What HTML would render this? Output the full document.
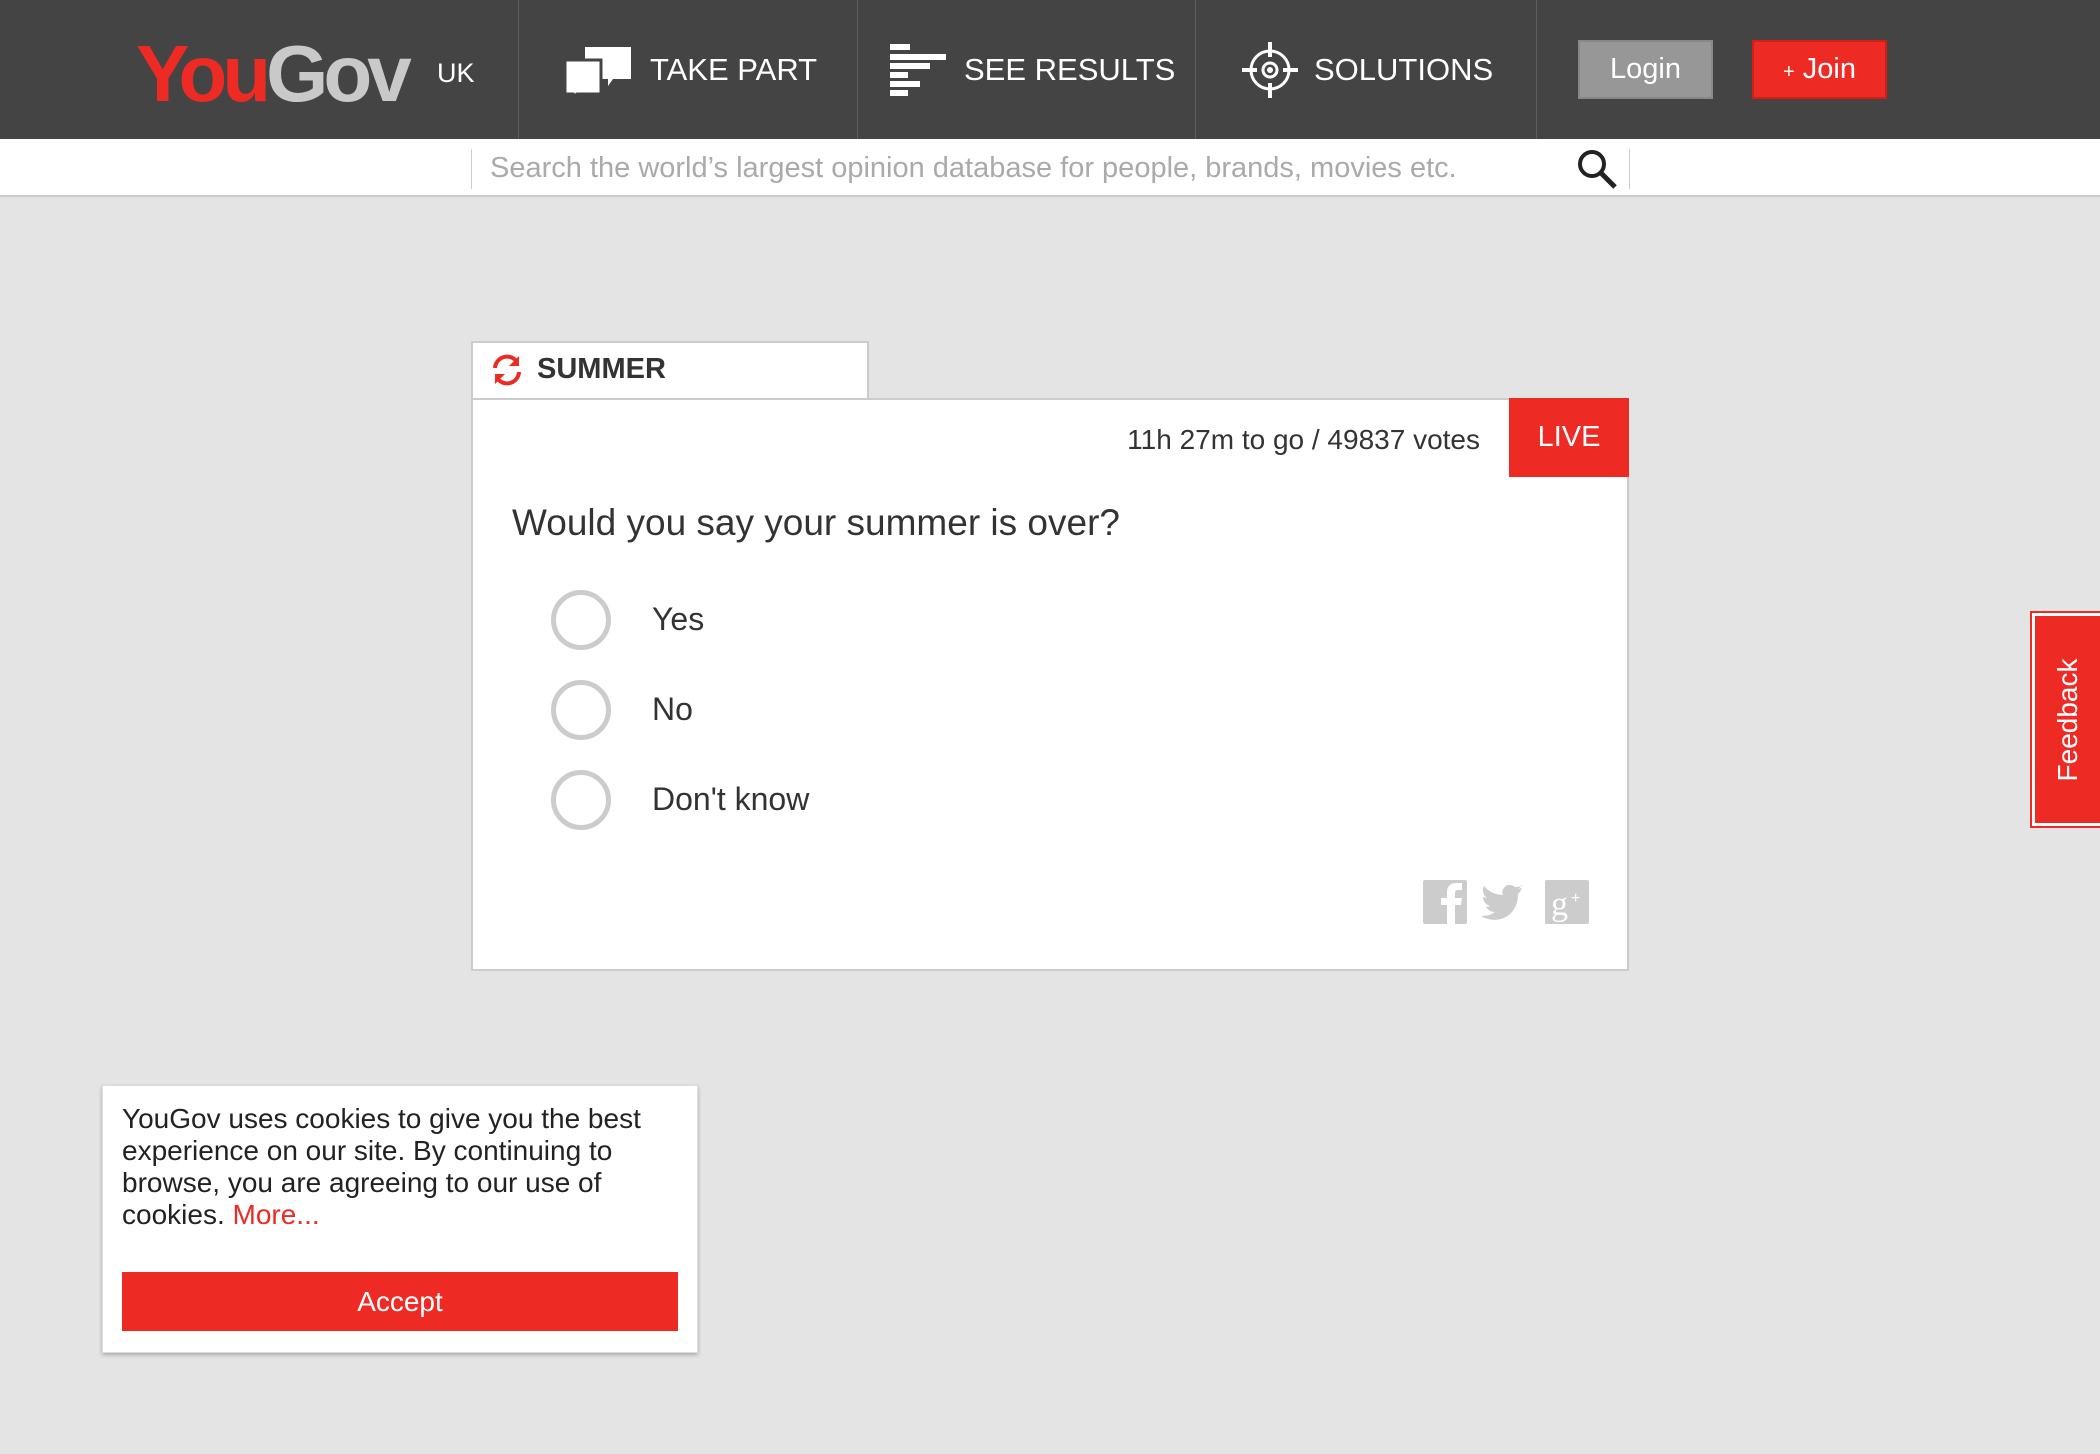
<!DOCTYPE html>
<html><head><meta charset="utf-8"><style>
*{margin:0;padding:0;box-sizing:border-box}
body{width:2100px;height:1454px;background:#e4e4e4;font-family:"Liberation Sans",sans-serif;position:relative;overflow:hidden;color:#333}
.hdr{position:absolute;left:0;top:0;width:2100px;height:139px;background:#444}
.div{position:absolute;top:0;width:1px;height:139px;background:#5e5e5e}
.nav{position:absolute;top:50px;color:#fff;font-size:31px;line-height:40px}
.logo{position:absolute;left:136px;top:24px;font-size:80px;font-weight:bold;letter-spacing:-5px;line-height:100px}
.sb{position:absolute;left:0;top:139px;width:2100px;height:58px;background:#fff;border-bottom:2px solid #ccc}
.abs{position:absolute}
</style></head><body>
<div class="hdr">
 <div class="logo"><span style="color:#ee2a24">You</span><span style="color:#c9c9c9">Gov</span></div>
 <div class="abs" style="left:437px;top:58px;color:#fff;font-size:27px">UK</div>
 <div class="div" style="left:518px"></div><div class="div" style="left:857px"></div><div class="div" style="left:1195px"></div><div class="div" style="left:1536px"></div>
 <svg class="abs" style="left:563px;top:44px" width="70" height="54" viewBox="0 0 70 54"><path d="M22 3h46v32h-18l-5 7v-7h-23z" fill="#fff"/><path d="M2 16h36v34h-24l-4 3v-3h-8z" fill="#fff" stroke="#444" stroke-width="3"/></svg>
 <div class="nav" style="left:650px">TAKE PART</div>
 <svg class="abs" style="left:890px;top:44px" width="58" height="54"><g fill="#fff"><rect x="0" y="0" width="20" height="6"/><rect x="0" y="10" width="56" height="6"/><rect x="0" y="19" width="40" height="6"/><rect x="0" y="28" width="18" height="6"/><rect x="0" y="37" width="30" height="6"/><rect x="0" y="46" width="18" height="6"/></g></svg>
 <div class="nav" style="left:964px">SEE RESULTS</div>
 <svg class="abs" style="left:1241px;top:41px" width="58" height="58" viewBox="0 0 58 58"><circle cx="29" cy="29" r="19" fill="none" stroke="#fff" stroke-width="3"/><circle cx="29" cy="29" r="7" fill="none" stroke="#fff" stroke-width="3"/><circle cx="29" cy="29" r="3" fill="#fff"/><g stroke="#fff" stroke-width="4"><path d="M29 1v15M29 42v15M1 29h15M42 29h15"/></g></svg>
 <div class="nav" style="left:1314px">SOLUTIONS</div>
 <div class="abs" style="left:1578px;top:40px;width:135px;height:59px;background:#979797;border:2px solid #888;color:#fff;font-size:29px;text-align:center;line-height:55px">Login</div>
 <div class="abs" style="left:1752px;top:40px;width:135px;height:59px;background:#ee2a24;border:2px solid #d41d17;color:#fff;font-size:29px;text-align:center;line-height:55px"><span style="font-size:20px">+</span> Join</div>
</div>
<div class="sb">
 <div class="abs" style="left:471px;top:10px;width:1px;height:40px;background:#ccc"></div>
 <div class="abs" style="left:1629px;top:10px;width:1px;height:40px;background:#ccc"></div>
 <div class="abs" style="left:490px;top:13px;font-size:29px;color:#aaa">Search the world’s largest opinion database for people, brands, movies etc.</div>
 <svg class="abs" style="left:1576px;top:9px" width="44" height="44"><circle cx="16" cy="16" r="12" fill="none" stroke="#222" stroke-width="4"/><path d="M25 25l14 14" stroke="#222" stroke-width="5"/></svg>
</div>
<div class="abs" style="left:471px;top:341px;width:398px;height:59px;background:#fff;border:2px solid #ccc;border-bottom:none"></div>
<svg class="abs" style="left:490px;top:353px" width="34" height="34" viewBox="0 0 34 34"><path d="M5 15A12 12 0 0 1 27 9" fill="none" stroke="#ee2a24" stroke-width="4"/><path d="M29 19A12 12 0 0 1 7 25" fill="none" stroke="#ee2a24" stroke-width="4"/><path d="M29 3v10h-10z" fill="#ee2a24"/><path d="M5 31v-10h10z" fill="#ee2a24"/></svg>
<div class="abs" style="left:537px;top:353px;font-size:29px;font-weight:bold;color:#333">SUMMER</div>
<div class="abs" style="left:471px;top:398px;width:1158px;height:573px;background:#fff;border:2px solid #ccc"></div>
<div class="abs" style="left:1509px;top:398px;width:120px;height:79px;background:#ee2a24;color:#fff;font-size:29px;text-align:center;line-height:79px">LIVE</div>
<div class="abs" style="left:1000px;width:480px;text-align:right;top:424px;font-size:28px;color:#333">11h 27m to go / 49837 votes</div>
<div class="abs" style="left:512px;top:502px;font-size:37px;color:#333">Would you say your summer is over?</div>
<div class="abs" style="left:551px;top:590px;width:60px;height:60px;border:5px solid #ccc;border-radius:50%"></div>
<div class="abs" style="left:551px;top:680px;width:60px;height:60px;border:5px solid #ccc;border-radius:50%"></div>
<div class="abs" style="left:551px;top:770px;width:60px;height:60px;border:5px solid #ccc;border-radius:50%"></div>
<div class="abs" style="left:652px;top:601px;font-size:32px">Yes</div>
<div class="abs" style="left:652px;top:691px;font-size:32px">No</div>
<div class="abs" style="left:652px;top:781px;font-size:32px">Don't know</div>
<svg class="abs" style="left:1423px;top:877px" width="168" height="50"><rect x="0" y="3" width="44" height="44" rx="2" fill="#ccc"/><path d="M24 47V28h-6v-7h6v-6c0-6 4-9 9-9h6v7h-4c-2 0-3 1-3 3v5h7l-1 7h-6v19z" fill="#fff"/><path d="M100 8c-3 2-6 2-8 2-3-3-9-3-11 1-2 2-2 5-1 7-8 0-15-4-19-9-2 4-1 9 3 12-2 0-3-1-4-1 0 4 3 8 7 9-2 1-3 1-4 0 1 4 5 6 9 6-4 3-9 4-14 4 17 10 37 0 37-22 2-2 3-4 4-6l-4 1c2-1 3-3 4-4z" fill="#ccc"/><rect x="122" y="3" width="44" height="44" rx="2" fill="#ccc"/><text x="128" y="38" font-family="Liberation Serif" font-size="34" fill="#fff">g</text><text x="148" y="26" font-size="16" fill="#fff">+</text></svg>
<div class="abs" style="left:102px;top:1085px;width:596px;height:268px;background:#fff;border:1px solid #ddd;box-shadow:0 2px 4px rgba(0,0,0,.25)"></div>
<div class="abs" style="left:122px;top:1103px;width:560px;font-size:28px;line-height:32px;color:#222">YouGov uses cookies to give you the best experience on our site. By continuing to browse, you are agreeing to our use of cookies. <span style="color:#ee2a24">More...</span></div>
<div class="abs" style="left:122px;top:1272px;width:556px;height:59px;background:#ee2a24;color:#fff;font-size:28px;text-align:center;line-height:59px">Accept</div>
<div class="abs" style="left:2030px;top:611px;width:75px;height:217px;background:#ee2a24;border:2px solid #ee2a24;box-shadow:inset 0 0 0 3px #fff"></div>
<div class="abs" style="left:2068px;top:720px;transform:translate(-50%,-50%) rotate(-90deg);color:#fff;font-size:28px;white-space:nowrap">Feedback</div>
</body></html>
